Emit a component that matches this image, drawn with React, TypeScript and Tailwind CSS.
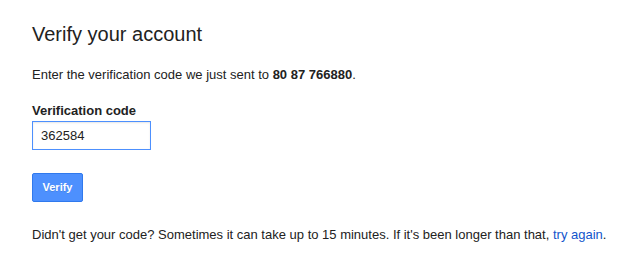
import React from "react";

export default function App() {
  return (
    <div className="w-[625px] h-[273px] bg-white text-[#222] text-[13px] leading-[17px]" style={{ fontFamily: '"Liberation Sans", Arial, sans-serif' }}>
      <div className="pl-[32px] pt-[22px]">
        <h1 className="text-[20px] leading-[24px] text-[#222] font-normal">Verify your account</h1>
        <p className="mt-[20px]">
          Enter the verification code we just sent to <b>80 87 766880</b>.
        </p>
        <label className="block mt-[19px] font-bold">Verification code</label>
        <input
          defaultValue="362584"
          className="mt-[2px] block w-[119px] h-[29px] border border-[#4d90fe] px-[8px] text-[13px] text-[#222] outline-none shadow-[inset_0_1px_2px_rgba(0,0,0,0.1)]"
          style={{ fontFamily: '"Liberation Sans", Arial, sans-serif' }}
        />
        <button className="mt-[23px] block w-[51px] h-[29px] rounded-[2px] border border-[#3079ed] bg-[#4d90fe] text-white text-[11px] font-bold [text-shadow:0_1px_rgba(0,0,0,0.1)]">
          Verify
        </button>
        <p className="mt-[24px]">
          Didn't get your code? Sometimes it can take up to 15 minutes. If it's been longer than that,{" "}
          <a className="text-[#15c]">try again</a>.
        </p>
      </div>
    </div>
  );
}
